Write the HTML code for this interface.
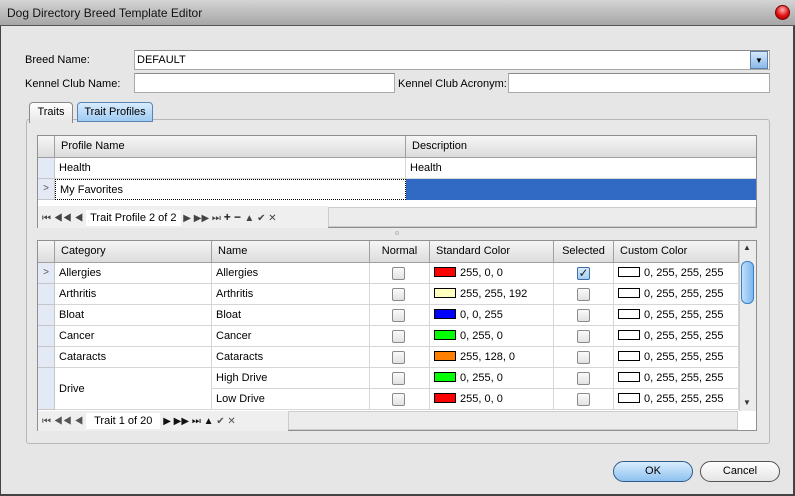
<!DOCTYPE html>
<html><head><style>
*{box-sizing:border-box;margin:0;padding:0}
body{width:795px;height:496px;background:#e6e6e6;font-family:"Liberation Sans",sans-serif;font-size:11px;color:#000;position:relative;overflow:hidden}
.a{position:absolute}
.inp{position:absolute;background:#fff;border:1px solid #a9a9a9;border-top-color:#8a8a8a}
.grid{position:absolute;background:#fff;border:1px solid #8f8f8f}
.hd{position:absolute;background:linear-gradient(#f6f6f6,#dcdcdc);border-right:1px solid #a0a0a0;border-bottom:1px solid #a0a0a0;height:22px;line-height:21px;padding-left:6px}
.c{position:absolute;border-right:1px solid #d6d6d6;border-bottom:1px solid #d6d6d6;height:21px;line-height:20px;padding-left:4px;white-space:nowrap}
.ind{position:absolute;background:#e3e9f5;border-right:1px solid #c6c6c6;border-bottom:1px solid #c6c6c6;width:17px}
.cb{position:absolute;width:13px;height:13px;border:1px solid #8a8a8a;border-radius:2px;background:linear-gradient(#fafafa,#e2e2e2)}
.sw{display:inline-block;width:22px;height:10px;border:1px solid #000;vertical-align:-1px;margin-right:4px}
.nav{position:absolute;background:#efefef;height:22px;line-height:22px;color:#444;font-size:10px;white-space:nowrap}
.btn{position:absolute;height:21px;border-radius:11px;text-align:center;line-height:19px;border:1px solid #555}
</style></head><body>
<div class="a" style="left:0;top:0;width:795px;height:26px;background:linear-gradient(#d4d4d4,#a6a6a6);border-bottom:1px solid #555"></div>
<div class="a" style="left:7px;top:6px;font-size:12px;color:#111">Dog Directory Breed Template Editor</div>
<div class="a" style="left:775px;top:5px;width:15px;height:15px;border-radius:50%;background:radial-gradient(circle at 50% 30%,#ffb0b0,#e01010 55%,#900 100%);border:1px solid #700"></div>
<div class="a" style="left:0;top:26px;width:1px;height:470px;background:#444"></div>
<div class="a" style="right:0;top:26px;width:2px;height:470px;background:#444"></div>
<div class="a" style="left:0;bottom:0;width:795px;height:2px;background:#444"></div>

<div class="a" style="left:25px;top:54px">Breed Name:</div>
<div class="inp" style="left:134px;top:50px;width:636px;height:20px;padding:3px 2px">DEFAULT</div>
<div class="a" style="left:750px;top:51px;width:18px;height:18px;background:linear-gradient(#d6e8fb,#8ab8ea);border:1px solid #5d7fa6;text-align:center;font-size:8px;line-height:17px">▼</div>
<div class="a" style="left:25px;top:78px">Kennel Club Name:</div>
<div class="inp" style="left:134px;top:73px;width:261px;height:20px"></div>
<div class="a" style="left:398px;top:78px">Kennel Club Acronym:</div>
<div class="inp" style="left:508px;top:73px;width:262px;height:20px"></div>

<div class="a" style="left:26px;top:119px;width:744px;height:325px;border:1px solid #b8b8b8;border-radius:3px;background:#e8e8e8"></div>
<div class="a" style="left:29px;top:102px;width:44px;height:21px;border:1px solid #888;border-bottom:none;border-radius:4px 4px 0 0;background:linear-gradient(#fff,#e6e6e6);text-align:center;line-height:19px">Traits</div>
<div class="a" style="left:77px;top:102px;width:76px;height:20px;border:1px solid #5a84b5;border-radius:4px 4px 0 0;background:linear-gradient(#d8ecfd,#9fcaf2);text-align:center;line-height:19px">Trait Profiles</div>

<div class="grid" style="left:37px;top:135px;width:720px;height:93px">
 <div class="hd" style="left:0;top:0;width:17px;padding:0"></div>
 <div class="hd" style="left:17px;top:0;width:351px">Profile Name</div>
 <div class="hd" style="left:368px;top:0;width:350px;border-right:none">Description</div>
 <div class="ind" style="left:0;top:22px;height:21px"></div>
 <div class="c" style="left:17px;top:22px;width:351px">Health</div>
 <div class="c" style="left:368px;top:22px;width:350px;border-right:none">Health</div>
 <div class="ind" style="left:0;top:43px;height:21px;color:#555;text-align:center;line-height:20px;font-size:10px">&gt;</div>
 <div class="c" style="left:17px;top:43px;width:351px;border:1px dotted #000">My Favorites</div>
 <div class="c" style="left:368px;top:43px;width:350px;background:#316ac5;border:none"></div>
 <div class="nav" style="left:0;top:70px;width:290px;padding-left:4px">⏮ ◀◀ ◀ <span style="background:#fff;color:#000;font-size:11px;padding:2px 4px">Trait Profile 2 of 2</span> ▶ ▶▶ ⏭ <b style="color:#222;font-size:12px">+ − </b>▲ ✔ ✕</div>
 <div class="a" style="left:290px;top:71px;width:428px;height:20px;background:#ececec;border:1px solid #ccc"></div>
</div>
<div class="a" style="left:395px;top:231px;width:4px;height:4px;border-radius:50%;border:1px solid #bbb"></div>

<div class="grid" style="left:37px;top:240px;width:720px;height:191px">
 <div class="hd" style="left:0;top:0;width:17px;padding:0"></div>
 <div class="hd" style="left:17px;top:0;width:157px">Category</div>
 <div class="hd" style="left:174px;top:0;width:158px">Name</div>
 <div class="hd" style="left:332px;top:0;width:60px;text-align:center;padding:0">Normal</div>
 <div class="hd" style="left:392px;top:0;width:124px">Standard Color</div>
 <div class="hd" style="left:516px;top:0;width:60px;text-align:center;padding:0">Selected</div>
 <div class="hd" style="left:576px;top:0;width:125px">Custom Color</div>
 <div class="a" style="left:701px;top:0;width:17px;height:170px;background:#ececec;border-left:1px solid #ccc"></div>
 <div class="a" style="left:705px;top:2px;font-size:8px;color:#333">▲</div>
 <div class="a" style="left:705px;top:157px;font-size:8px;color:#333">▼</div>
 <div class="a" style="left:703px;top:20px;width:13px;height:43px;border:1px solid #3c7fc8;border-radius:6px;background:linear-gradient(90deg,#bfe0fb,#7cb6ef)"></div>
</div>
<div id="rows"></div>
<div class="a" style="left:38px;top:411px;width:250px;height:20px;background:#efefef;line-height:20px;color:#555;font-size:10px;padding-left:4px;white-space:nowrap">⏮ ◀◀ ◀ <span style="background:#fff;color:#000;font-size:11px;padding:2px 8px">Trait 1 of 20</span> <span style="color:#111">▶ ▶▶ ⏭ ▲</span> ✔ ✕</div>
<div class="a" style="left:288px;top:411px;width:450px;height:19px;background:#ececec;border:1px solid #ccc"></div>

<div class="btn" style="left:613px;top:461px;width:80px;background:linear-gradient(#d9edfd,#8ec1ef);border-color:#2f5c8a">OK</div>
<div class="btn" style="left:700px;top:461px;width:80px;background:linear-gradient(#fff,#e4e4e4)">Cancel</div>

<script>
var r=[["Allergies","Allergies","#f00","255, 0, 0",1],["Arthritis","Arthritis","#ffffc0","255, 255, 192"],["Bloat","Bloat","#00f","0, 0, 255"],["Cancer","Cancer","#0f0","0, 255, 0"],["Cataracts","Cataracts","#ff8000","255, 128, 0"],["Drive","High Drive","#0f0","0, 255, 0"],["","Low Drive","#f00","255, 0, 0"]];
var h="";
r.forEach(function(x,i){var t=263+21*i;
h+='<div class="ind" style="left:38px;top:'+t+'px;height:21px;border-bottom:'+(i==5?'none':'1px solid #c6c6c6')+';color:#555;text-align:center;line-height:20px;font-size:10px">'+(i==0?'&gt;':'')+'</div>';
if(i<5)h+='<div class="c" style="left:55px;top:'+t+'px;width:157px">'+x[0]+'</div>';
if(i==5)h+='<div class="c" style="left:55px;top:'+t+'px;width:157px;height:42px;line-height:42px">Drive</div>';
h+='<div class="c" style="left:212px;top:'+t+'px;width:158px">'+x[1]+'</div>';
h+='<div class="c" style="left:370px;top:'+t+'px;width:60px"></div><div class="cb" style="left:392px;top:'+(t+4)+'px"></div>';
h+='<div class="c" style="left:430px;top:'+t+'px;width:124px"><span class="sw" style="background:'+x[2]+'"></span>'+x[3]+'</div>';
h+='<div class="c" style="left:554px;top:'+t+'px;width:60px"></div><div class="cb" style="left:577px;top:'+(t+4)+'px;'+(x[4]?'background:linear-gradient(#d8ebfb,#a8cdf0);border-color:#3b6ea5;font-size:12px;line-height:10px;text-align:center;color:#123">✓':'">')+'</div>';
h+='<div class="c" style="left:614px;top:'+t+'px;width:125px"><span class="sw" style="background:#fff"></span>0, 255, 255, 255</div>';});
document.getElementById("rows").innerHTML=h;
</script>
</body></html>
